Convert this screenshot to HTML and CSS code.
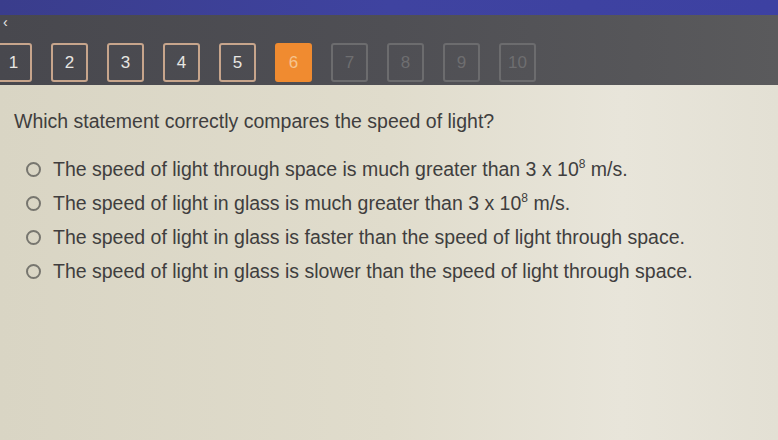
FILE: index.html
```html
<!DOCTYPE html>
<html>
<head>
<meta charset="utf-8">
<link rel="stylesheet" href="styles.css">
</head>
<body>
<div class="page">
  <header class="topband"></header>
  <nav class="qbar">
    <span class="chev">&lsaquo;</span>
    <div class="qnums">
      <div class="qbtn done">1</div>
      <div class="qbtn done">2</div>
      <div class="qbtn done">3</div>
      <div class="qbtn done">4</div>
      <div class="qbtn done">5</div>
      <div class="qbtn current">6</div>
      <div class="qbtn todo">7</div>
      <div class="qbtn todo">8</div>
      <div class="qbtn todo">9</div>
      <div class="qbtn todo">10</div>
    </div>
  </nav>
  <main class="content">
    <p class="question">Which statement correctly compares the speed of light?</p>
    <ul class="options">
      <li class="option"><span class="radio"></span><span class="label">The speed of light through space is much greater than 3 x 10<sup>8</sup> m/s.</span></li>
      <li class="option"><span class="radio"></span><span class="label">The speed of light in glass is much greater than 3 x 10<sup>8</sup> m/s.</span></li>
      <li class="option"><span class="radio"></span><span class="label">The speed of light in glass is faster than the speed of light through space.</span></li>
      <li class="option"><span class="radio"></span><span class="label">The speed of light in glass is slower than the speed of light through space.</span></li>
    </ul>
  </main>
</div>
</body>
</html>
```
FILE: styles.css
```css
html, body {
  margin: 0;
  padding: 0;
}
body {
  width: 778px;
  height: 440px;
  overflow: hidden;
  font-family: "Liberation Sans", Arial, sans-serif;
  background: #e0dccb;
}
.page {
  display: flex;
  flex-direction: column;
  height: 440px;
}
.topband {
  height: 15px;
  background: linear-gradient(90deg, #3a3d8c 0%, #3f43a0 50%, #3d41a2 100%);
}
.qbar {
  position: relative;
  height: 70px;
  background: linear-gradient(90deg, #48484e 0%, #4f4f54 50%, #5a5a5c 100%);
  display: flex;
  align-items: flex-start;
}
.chev {
  position: absolute;
  left: 3px;
  top: 0px;
  color: #e8e8e8;
  font-size: 14px;
  line-height: 14px;
}
.qnums {
  display: flex;
  gap: 19px;
  margin-left: -5px;
  margin-top: 28px;
}
.qbtn {
  width: 33px;
  height: 35px;
  border: 2px solid #c7a58c;
  border-radius: 3px;
  display: flex;
  align-items: center;
  justify-content: center;
  font-size: 17px;
  color: #e8e6e2;
}
.qbtn.current {
  background: #f08b30;
  border-color: #f08b30;
  color: #f6c48e;
}
.qbtn.todo {
  border-color: #6c6c6e;
  color: #6e6e70;
}
.content {
  flex: 1;
  background: linear-gradient(90deg, #d9d5c4 0%, #e0dccc 50%, #e8e5da 80%, #e3e0d4 100%);
  padding: 24px 0 0 14px;
  color: #403e3e;
}
.question {
  margin: 0 0 24px 0;
  font-size: 19.5px;
  line-height: 24px;
}
.options {
  list-style: none;
  margin: 0;
  padding: 0 0 0 12px;
  display: flex;
  flex-direction: column;
  gap: 10px;
}
.option {
  display: flex;
  align-items: center;
  height: 24px;
  font-size: 19.5px;
}
.radio {
  width: 11px;
  height: 11px;
  border: 2px solid #77766f;
  border-radius: 50%;
  margin-right: 12px;
  flex: none;
}
.label sup {
  font-size: 12px;
  line-height: 0;
  vertical-align: 8px;
}
```
